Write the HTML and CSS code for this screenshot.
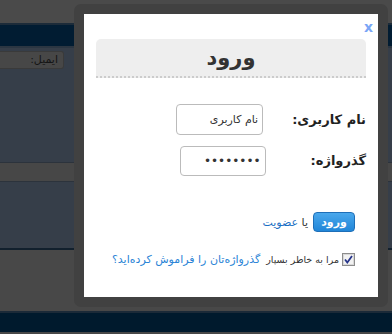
FILE: index.html
```html
<!DOCTYPE html>
<html lang="fa" dir="rtl">
<head>
<meta charset="UTF-8">
<meta name="viewport" content="width=device-width, initial-scale=1.0">
<title>ورود</title>
<link rel="stylesheet" href="styles.css">
</head>
<body>
<div class="page">
    <div class="topbar"></div>
    <div class="navbar"></div>
    <div class="content">
        <div class="email-row"><span class="email-field">ایمیل:</span></div>
        <div class="band"></div>
    </div>
    <div class="lower"></div>
    <div class="footer"></div>
</div>

<div class="modal">
    <div class="modal-frame">
        <div class="modal-box">
            <a class="close" href="#">x</a>
            <h2 class="modal-title">ورود</h2>
            <form class="login-form">
                <div class="form-row">
                    <label class="form-label">نام کاربری:</label>
                    <input class="form-input user" type="text" value="نام کاربری">
                </div>
                <div class="form-row">
                    <label class="form-label">گذرواژه:</label>
                    <input class="form-input pass" type="password" value="password">
                </div>
                <div class="action-row">
                    <button class="btn-login" type="button">ورود</button>
                    <span class="or">یا <a href="#">عضویت</a></span>
                </div>
                <div class="remember-row">
                    <span class="check">
                        <svg width="13" height="13" viewBox="0 0 13 13">
                            <rect x="0.5" y="0.5" width="12" height="12" fill="#f2f2f2" stroke="#8c8c8c"/>
                            <rect x="1.5" y="1.5" width="10" height="10" fill="none" stroke="#d8d8d8"/>
                            <path d="M3 6.5 L5.3 9.5 L10 3" fill="none" stroke="#26348a" stroke-width="1.8"/>
                        </svg>
                    </span>
                    <span class="remember">مرا به خاطر بسپار</span>
                    <a class="forgot" href="#">گذرواژه‌تان را فراموش کرده‌اید؟</a>
                </div>
            </form>
        </div>
    </div>
</div>
</body>
</html>
```

FILE: styles.css
```css
* { margin: 0; padding: 0; box-sizing: border-box; }
body {
    font-family: "DejaVu Sans", sans-serif;
    background: #484848;
    width: 392px; height: 334px; overflow: hidden;
    position: relative;
}
.topbar { height: 25px; background: #4a4a4a; border-bottom: 2px solid #1c2b39; }
.navbar { height: 23px; background: #011c32; border-bottom: 2px solid #2b3642; }
.content { height: 200px; background: #363e49; padding-top: 3px; }
.email-row { display: flex; justify-content: flex-end; }
.email-field {
    width: 64px; height: 18px; background: #474747;
    border: 1px solid #3a3a3a; border-left: none; border-radius: 0 3px 3px 0;
    font-size: 11px; color: #151515; text-align: right; padding: 1px 5px 0 0;
}
.band { margin-top: 93px; height: 20px; background: #474747; border-top: 1px solid #2c333c; border-bottom: 1px solid #2c333c; }
.lower { height: 63px; background: #484848; border-top: 2px solid #12202d; }
.footer { height: 21px; background: #001a2d; border-top: 2px solid #1b2a38; }

.modal { position: absolute; top: 4px; left: 74px; }
.modal-frame {
    width: 314px; height: 303px; background: #414141;
    border-radius: 7px; padding: 10px;
}
.modal-box {
    background: #fff; height: 283px; position: relative;
    padding: 25px 12px 0 12px;
}
.close {
    position: absolute; top: 5px; left: 280px;
    color: #7aa6f6; font-size: 14px; font-weight: bold; text-decoration: none;
}
.modal-title {
    height: 39px; background: #eee; border-radius: 5px 5px 0 0;
    border-bottom: 2px dotted #ccc;
    text-align: center; font-size: 21px; color: #333; line-height: 38px;
}
.login-form { padding-top: 26px; }
.form-row { display: flex; align-items: center; height: 31px; margin-bottom: 10px; }
.form-label { font-size: 13px; font-weight: bold; color: #222; white-space: nowrap; }
.form-input {
    height: 31px; border: 1px solid #bbb; border-radius: 4px;
    font-family: "DejaVu Sans", sans-serif; font-size: 11px; color: #333;
    padding: 0 4px; text-align: right;
}
.form-input.user { width: 87px; margin-right: 29px; }
.form-input.pass { width: 86px; height: 30px; margin-right: 45px; font-size: 12px; }
.action-row { display: flex; align-items: center; margin-top: 36px; padding-right: 11px; }
.btn-login {
    width: 42px; height: 20px; border: 1px solid #1e6fb8; border-radius: 4px;
    background: linear-gradient(#4aa8ec, #2186d8); color: #fff;
    font-family: "DejaVu Sans", sans-serif; font-size: 11px; font-weight: bold;
}
.or { font-size: 11px; color: #333; margin-right: 5px; white-space: nowrap; }
.or a { color: #1a6fc4; text-decoration: none; }
.remember-row { display: flex; align-items: center; margin-top: 21px; padding-right: 11px; white-space: nowrap; }
.check { display: flex; width: 13px; height: 13px; }
.remember { font-size: 9.5px; color: #333; margin-right: 3px; }
.forgot { font-size: 11px; color: #2a84d6; text-decoration: none; margin-right: 6px; }
```
